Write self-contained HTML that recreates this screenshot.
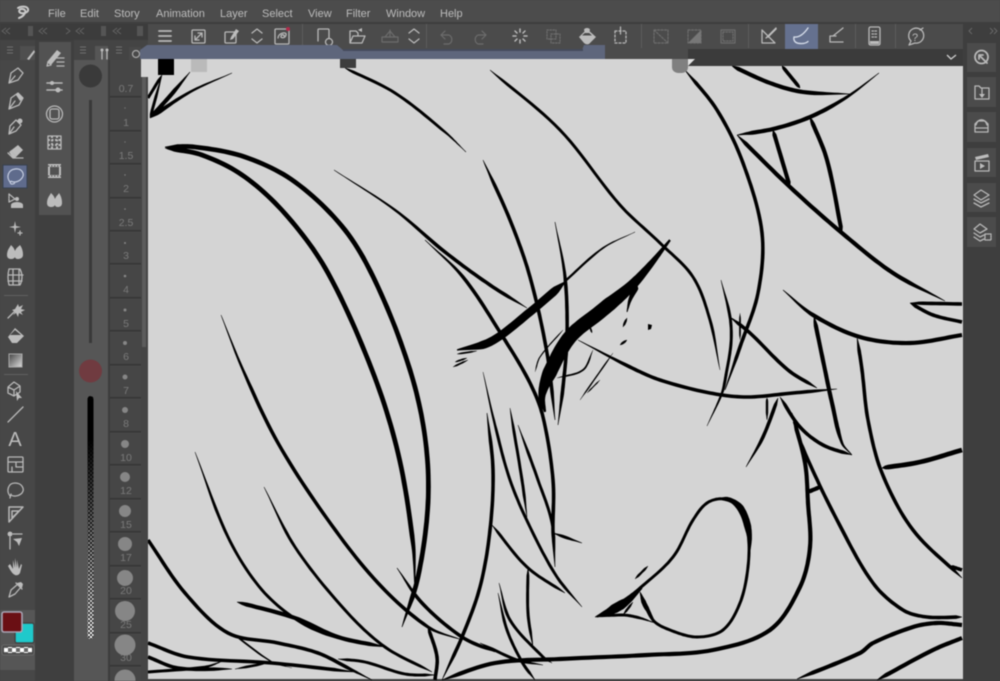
<!DOCTYPE html>
<html><head><meta charset="utf-8">
<style>
html,body{margin:0;padding:0;background:#444;width:1000px;height:681px;overflow:hidden}
svg{display:block;position:absolute;left:0;top:0;filter:blur(.45px)}
.m{font:11px "Liberation Sans",sans-serif;fill:#bcbcbc}
.n{font:10.5px "Liberation Sans",sans-serif;fill:#7a7a7a;text-anchor:middle}
.i{fill:none;stroke:#b8b8b8;stroke-width:1.3;stroke-linejoin:round;stroke-linecap:round}
.d{fill:none;stroke:#6c6c6c;stroke-width:1.2;stroke-linejoin:round;stroke-linecap:round}
.f{fill:#bcbcbc;stroke:none}
</style></head><body>
<svg width="1000" height="681" viewBox="0 0 1000 681" xmlns="http://www.w3.org/2000/svg">
<defs>
<pattern id="ck" width="4" height="4" patternUnits="userSpaceOnUse"><rect width="4" height="4" fill="#fff"/><rect width="2" height="2" fill="#333"/><rect x="2" y="2" width="2" height="2" fill="#333"/></pattern>
<pattern id="ck2" width="8" height="8" patternUnits="userSpaceOnUse"><rect width="8" height="8" fill="#fff"/><rect width="4" height="4" fill="#666"/><rect x="4" y="4" width="4" height="4" fill="#666"/></pattern>
<linearGradient id="fade" x1="0" y1="0" x2="0" y2="1"><stop offset="0" stop-color="#000"/><stop offset=".18" stop-color="#000"/><stop offset=".55" stop-color="#000" stop-opacity=".55"/><stop offset="1" stop-color="#000" stop-opacity="0"/></linearGradient>
<linearGradient id="gr" x1="0" y1="0" x2="1" y2="1"><stop offset="0" stop-color="#444"/><stop offset="1" stop-color="#ddd"/></linearGradient>
</defs>

<rect width="1000" height="681" fill="#444"/>
<rect width="1000" height="23" fill="#4c4c4c"/>
<rect y="22" width="1000" height="2" fill="#3e3e3e"/>
<path class="i" style="stroke-width:2;stroke:#c8c8c8" d="M18 8C21 6 27 6 28 9C29 12 24 14 21 13C18 12 19 9 22 9C25 9 26 11 25 13C24 15 22 17 19 18"/>
<text class="m" x="48" y="17">File</text>
<text class="m" x="80" y="17">Edit</text>
<text class="m" x="114" y="17">Story</text>
<text class="m" x="156" y="17">Animation</text>
<text class="m" x="220" y="17">Layer</text>
<text class="m" x="262" y="17">Select</text>
<text class="m" x="308" y="17">View</text>
<text class="m" x="346" y="17">Filter</text>
<text class="m" x="386" y="17">Window</text>
<text class="m" x="440" y="17">Help</text>

<rect x="148" y="24" width="815" height="25" fill="#4b4b4b"/>
<rect x="785" y="24" width="33" height="25" fill="#65718f"/>
<g fill="#5d5d5d"><rect x="302" y="24" width="1" height="24"/><rect x="426" y="24" width="1" height="24"/><rect x="641" y="24" width="1" height="24"/><rect x="748" y="24" width="1" height="24"/><rect x="855" y="24" width="1" height="24"/><rect x="895" y="24" width="1" height="24"/></g>
<path class="i" style="stroke-width:1.8" d="M159 31H171M159 36H171M159 41H171"/>
<rect class="i" x="192" y="30" width="13" height="13" rx="1"/><path class="i" d="M195 40L202 33M198 33H202V37M195 36V40H199"/>
<rect class="i" x="225" y="32" width="11" height="11" rx="1"/><path class="f" d="M231 37L236 29L239 31L233 39L230 40Z"/>
<path class="i" d="M252 33L257 29L262 33M252 39L257 43L262 39"/>
<rect class="i" x="275" y="29" width="14" height="15" rx="1"/><path class="i" d="M278 38C278 33 287 31 286 35C285 39 280 38 281 36C282 34 285 35 284 36"/><circle cx="288" cy="29" r="2" fill="#b02a4a"/>
<path class="i" d="M318 41V30Q318 29 319 29H328Q329 29 329 30V38"/><circle class="i" cx="329" cy="42" r="3.5"/>
<path class="i" d="M350 31H356L358 33V35M350 31V43H362L365 36H353L350 43"/><path class="f" d="M358 30l4-2v4z"/>
<path class="d" d="M382 42V37H398V42ZM385 37L390 31L395 37M390 30V36"/>
<path class="i" d="M409 33L414 29L419 33M409 39L414 43L419 39"/>
<path class="d" d="M441 35H449A5 5 0 0 1 449 44H444M441 35L445 31M441 35L445 39"/>
<path class="d" d="M486 35H478A5 5 0 0 0 478 44H483M486 35L482 31M486 35L482 39"/>
<path class="i" style="stroke-width:1.5" d="M520 29V32M520 40V43M513 36H516M524 36H527M515 31L517 33M523 39L525 41M525 31L523 33M517 39L515 41"/>
<path class="d" stroke-dasharray="1.5 1.5" d="M547 30H556V39H547ZM551 34H560V43H551Z"/>
<path class="f" d="M587 29L596 37L589 44Q586 45 584 43L579 37Z"/><path fill="#4b4b4b" d="M582 35.500H592L587 31Z"/><path class="f" d="M584 30a3 2 0 0 1 6 0l-1 3h-4z"/>
<path class="i" stroke-dasharray="2 2" d="M615 31H626V43H615Z"/><path class="i" d="M620.5 27V34"/>
<path class="d" stroke-dasharray="2 1.5" d="M654 30H668V43H654ZM654 30L668 43"/>
<rect class="d" x="688" y="30" width="13" height="13" stroke-dasharray="2 1.5"/><path fill="#777" d="M701 30V43H688Z"/>
<rect class="d" x="721" y="30" width="14" height="13"/><rect class="d" x="723" y="32" width="10" height="9" stroke-dasharray="1.5 1.5"/>
<path class="i" d="M762 30V43H775L762 30M766 38L776 28"/><path class="f" d="M767 37L776 28L777 29L768 38Z"/>
<path fill="none" stroke="#d4dbe8" stroke-width="1.4" stroke-linecap="round" d="M794 37Q793 43 800 43.5Q805 44 808 41.5M794 37Q801 38 808 28"/>
<path class="i" d="M830 42H843M830 42V36H836M833 36L843 28"/>
<rect class="i" x="869" y="27" width="11" height="18" rx="1.5"/><path class="i" stroke-dasharray="1.5 1.5" d="M872 31H877M872 34H877M872 37H877"/><rect class="f" x="870" y="41" width="9" height="3"/>
<path class="i" d="M909 45L911 41A7.5 7.5 0 1 1 915 43Z"/><text x="912" y="41" font-family="Liberation Sans" font-size="11" fill="#b8b8b8">?</text><path class="i" d="M920 30L923 28"/>

<rect x="141" y="59" width="822" height="620" fill="#d4d4d4"/>
<path id="art" fill="#000"/>

<rect x="141" y="77" width="7" height="604" fill="#454545"/>
<rect x="142" y="77" width="4" height="270" fill="#5c5c5c"/>
<rect x="0" y="24" width="148" height="16" fill="#3c3c3c"/>
<path fill="none" stroke="#626262" stroke-width="1" d="M6 28L2 31L6 34M10 28L6 31L10 34M43 28L39 31L43 34M47 28L43 31L47 34M66 28L70 31L66 34M80 28L76 31L80 34M84 28L80 31L84 34M117 28L113 31L117 34M121 28L117 31L121 34"/>
<rect x="28" y="26" width="5" height="10" fill="#555"/><rect x="101" y="26" width="5" height="10" fill="#555"/><rect x="137" y="26" width="6" height="10" fill="#555"/>

<rect x="0" y="40" width="35" height="641" fill="#444"/>
<rect x="20" y="46" width="16" height="14" fill="#4f4f4f"/>
<rect x="0" y="60" width="35" height="621" fill="#474747"/>
<path d="M7 47H13M7 50H13M7 53H13" stroke="#707070" fill="none"/>
<path class="f" d="M27 59L34 50L35 52L29 60Z"/>
<rect x="35" y="40" width="39" height="641" fill="#3f3f3f"/>
<rect x="39" y="42" width="32" height="173" fill="#525252"/>
<rect x="74" y="60" width="34" height="621" fill="#565656"/>
<rect x="95" y="46" width="13" height="14" fill="#565656"/>
<path d="M80 47H86M80 50H86M80 53H86M116 47H122M116 50H122M116 53H122" stroke="#707070" fill="none"/>
<path class="i" d="M102 50V59M107 50V59"/><circle class="f" cx="102" cy="50" r="1.5"/><circle class="f" cx="107" cy="50" r="1.5"/>
<rect x="129" y="47" width="12" height="13" fill="#4e4e4e" opacity=".5"/>
<circle cx="136" cy="54" r="3.5" fill="none" stroke="#aaa" stroke-width="1.2"/>
<circle cx="90.5" cy="76" r="11.5" fill="#3a3a3a"/>
<rect x="89" y="100" width="3" height="243" fill="#393939"/>
<circle cx="90.5" cy="371" r="11.5" fill="#703b40"/>
<rect x="87.5" y="396" width="6" height="243" rx="3" fill="url(#ck)"/>
<rect x="87.5" y="396" width="6" height="243" rx="3" fill="url(#fade)"/>
<rect x="108" y="60" width="33" height="621" fill="#3c3c3c"/>
<rect x="110" y="60" width="31" height="621" fill="#464646"/>
<g fill="#353535">
<rect x="110" y="96" width="31" height="1.5"/><rect x="110" y="130" width="31" height="1.5"/><rect x="110" y="163" width="31" height="1.5"/><rect x="110" y="197" width="31" height="1.5"/><rect x="110" y="230" width="31" height="1.5"/><rect x="110" y="263" width="31" height="1.5"/><rect x="110" y="297" width="31" height="1.5"/><rect x="110" y="330" width="31" height="1.5"/><rect x="110" y="364" width="31" height="1.5"/><rect x="110" y="397" width="31" height="1.5"/><rect x="110" y="431" width="31" height="1.5"/><rect x="110" y="464" width="31" height="1.5"/><rect x="110" y="498" width="31" height="1.5"/><rect x="110" y="531" width="31" height="1.5"/><rect x="110" y="565" width="31" height="1.5"/><rect x="110" y="598" width="31" height="1.5"/><rect x="110" y="632" width="31" height="1.5"/><rect x="110" y="665" width="31" height="1.5"/>
</g>
<text class="n" x="126" y="92">0.7</text>
<text class="n" x="126" y="126">1</text>
<text class="n" x="126" y="159">1.5</text>
<text class="n" x="126" y="192">2</text>
<text class="n" x="126" y="226">2.5</text>
<text class="n" x="126" y="259">3</text>
<text class="n" x="126" y="293">4</text>
<text class="n" x="126" y="327">5</text>
<text class="n" x="126" y="360">6</text>
<text class="n" x="126" y="394">7</text>
<text class="n" x="126" y="427">8</text>
<text class="n" x="126" y="461">10</text>
<text class="n" x="126" y="494">12</text>
<text class="n" x="126" y="528">15</text>
<text class="n" x="126" y="561">17</text>
<text class="n" x="126" y="594">20</text>
<text class="n" x="126" y="628">25</text>
<text class="n" x="126" y="661">30</text>
<g fill="#868686">
<circle cx="125" cy="108" r=".6"/><circle cx="125" cy="142" r=".6"/><circle cx="125" cy="175" r=".7"/><circle cx="125" cy="209" r=".8"/><circle cx="125" cy="243" r="1"/>
<circle cx="125" cy="276" r="1.3"/><circle cx="125" cy="310" r="1.5"/><circle cx="125" cy="343" r="2"/><circle cx="125" cy="377" r="2.5"/><circle cx="125" cy="410" r="3"/><circle cx="125" cy="444" r="4"/><circle cx="125" cy="477" r="5"/><circle cx="125" cy="511" r="6"/><circle cx="125" cy="544" r="7"/><circle cx="125" cy="578" r="8"/><circle cx="125" cy="611" r="10"/><circle cx="125" cy="645" r="10.5"/><circle cx="125" cy="680" r="10.5"/>
</g>

<g>
<path class="i" d="M9 83L11 73L18 68L23 73L18 80ZM9 83L15 76"/>
<path class="i" d="M9 109L11 98L18 93L23 98L19 105ZM9 109L15 101"/><path class="f" d="M16 95L18 93L23 98L20 101Z"/>
<path class="i" d="M9 134L10 126L16 120L21 125L16 131ZM9 134L14 127"/><circle class="f" cx="20" cy="121" r="2.5"/>
<path class="f" d="M9 152L18 145L23 150L15 158H13Z"/><path class="i" d="M8 153L13 158H23M11 151L16 156"/>
<rect x="3" y="165" width="24" height="23" fill="#5f6b8c" stroke="#37404f"/>
<path fill="none" stroke="#c5cde0" stroke-width="1.2" d="M10 182C6 177 8 170 15 169C22 168 25 174 22 178C19 182 14 183 11 181M11 181C9 184 12 185 15 183"/>
<path class="i" stroke-dasharray="1.5 1" d="M9 194V202M9 194L15 199L9 202"/><path class="f" d="M11 205a6 3 0 0 1 12 0v3H11z"/><circle class="f" cx="17" cy="199" r="2"/>
<path class="f" d="M15 221L16 226L21 227L16 228L15 233L14 228L9 227L14 226Z"/><path class="i" d="M20 231V235M18 233H22"/>
<path class="f" d="M7 255C7 250 10 247 11 245C13 247 14 248 15 251C16 248 18 247 20 245C22 248 23 251 23 255C23 258 20 259 18 259C16 259 15 258 15 257C14 259 12 259 11 259C9 259 7 258 7 255Z"/>
<path class="i" d="M9 269H20Q24 277 20 285H9Q7 277 9 269ZM8 275H23M8 281H22M13 269V285M19 269V285"/>
<rect x="4" y="295" width="24" height="1" fill="#606060"/>
<path class="i" d="M8 318L16 310"/><path class="f" d="M18 304L19 307L23 305L21 309L25 310L21 312L23 315L19 313L18 317L16 313L13 315L15 312L12 310L15 309Z"/>
<path class="f" d="M15 328L24 336L17 343H12L8 337Z"/><path fill="#474747" d="M10 335H21L15 330Z"/>
<rect x="9" y="354" width="13" height="13" fill="url(#gr)" stroke="#aaa"/>
<rect x="4" y="374" width="24" height="1" fill="#606060"/>
<path class="i" d="M8 387L14 382L20 386V392L14 396L8 393ZM8 387L14 390L20 386M14 390V396"/><path class="f" d="M16 391L17 401L19 398L22 398Z"/>
<path class="i" d="M8 422L23 407"/>
<text x="15" y="446" font-family="Liberation Sans" font-size="20" fill="#bcbcbc" text-anchor="middle">A</text>
<rect class="i" x="8" y="457" width="15" height="15" rx="1"/><path class="i" d="M8 462H23M16 462V467M16 467H23M12 467V472"/>
<path class="i" d="M10 496C6 491 8 483 15 483C22 483 25 489 22 493C19 496 14 497 11 495Z"/><path class="i" d="M11 494L10 498"/>
<path class="i" style="stroke-width:1.5" d="M9 522V507L23 507ZM12 518V511L19 511Z"/>
<path class="i" d="M10 532V549M8 534H22"/><rect class="f" x="8" y="532" width="4" height="4"/><path class="f" d="M13 539L22 538L19 546L17 542Z"/>
<path class="f" d="M10 564L13 569V560L15 568V558L17 568V560L19 569L21 564L22 565L20 573Q18 576 15 575Q12 574 8 566Z"/>
<path class="i" d="M9 597L11 590L18 584L21 587L15 594ZM16 583L22 589"/>
<path class="f" d="M17 583L21 582L23 584L22 588Z"/>
</g>
<rect x="0" y="610" width="35" height="60" fill="#565656"/>
<rect x="15" y="623" width="19" height="20" rx="2" fill="#1fc9cb" stroke="#444" stroke-width="1.5"/>
<rect x="2" y="612" width="20" height="20" rx="2" fill="#6a0f14" stroke="#a8a4b4" stroke-width="1.6"/>
<rect x="2" y="645" width="32" height="10" rx="2" fill="#4a4a4a" stroke="#707070" stroke-width=".8"/>
<rect x="4" y="647" width="28" height="6" fill="url(#ck2)"/>

<g>
<path class="f" d="M47 62L57 50L61 53L51 65Z"/><path class="i" d="M47 66L48 62L51 65ZM57 58H64M57 62H64M57 66H64"/>
<path class="i" style="stroke-width:1.6" d="M47 83H62M47 90H62"/><circle class="f" cx="52" cy="83" r="2"/><circle class="f" cx="58" cy="90" r="2.5"/>
<circle class="i" cx="54.5" cy="114" r="8"/><rect class="i" x="50" y="109" width="9" height="10" rx="2"/>
<rect class="i" x="48" y="136" width="13" height="13"/><path d="M48 140H61M48 145H61M52 136V149M57 136V149" stroke="#b8b8b8" stroke-width="2" stroke-dasharray="2 1.5" fill="none"/>
<rect class="f" x="48" y="164" width="13" height="14"/><rect x="50" y="167" width="9" height="8" fill="#525252"/><path d="M48 166H61M48 176H61" stroke="#525252" stroke-dasharray="1.5 1.5" fill="none"/>
<path class="f" d="M47 203C47 198 50 195 51 193C53 195 54 196 55 199C56 196 58 195 59 193C61 196 62 199 62 203C62 206 60 207 58 207C56 207 55 206 55 205C54 207 52 207 51 207C49 207 47 206 47 203Z"/>
</g>

<path fill="#5e667c" d="M140 50L147 45H337L343 50H582L584 45H605V59H140Z"/>
<rect x="343" y="49" width="240" height="2" fill="#454b5c"/>
<rect x="605" y="48" width="84" height="11" fill="#4b4b4b"/>
<rect x="688" y="49" width="275" height="17" fill="#3b3b3b"/>
<path d="M947 55L951 59L956 55" fill="none" stroke="#cfcfcf" stroke-width="1.3"/>
<rect x="158" y="59" width="16" height="16" fill="#000"/>
<rect x="191" y="59" width="16" height="13" fill="#bababa"/>
<rect x="340" y="59" width="16" height="9" fill="#3d3d3d"/>
<path d="M672 59H688V67Q688 72 682 73H678Q672 72 672 67Z" fill="#808080"/>
<path d="M688 59H695L688 66Z" fill="#e2e2e2"/>

<rect x="963" y="24" width="37" height="657" fill="#3e3e3e"/>
<path d="M972 28L969 31L972 34M990 28L993 31L990 34M994 28L997 31L994 34" fill="none" stroke="#666"/>
<g fill="#4b4b4b"><rect x="967" y="43" width="29" height="29"/><rect x="967" y="77" width="29" height="30"/><rect x="967" y="112" width="29" height="30"/><rect x="967" y="148" width="29" height="29"/><rect x="967" y="183" width="29" height="29"/><rect x="967" y="217" width="29" height="30"/></g>
<circle class="i" style="stroke-width:1.8" cx="981.5" cy="57" r="6.5"/><path class="i" style="stroke-width:1.8" d="M979 55L987 63M979 55H983M979 55V59"/>
<path class="i" d="M975 86H979L981 88H989V99H975ZM982 89V95"/><path class="f" d="M979 94H985L982 98Z"/>
<path class="i" d="M975 124L978 121H985L988 124V132H975ZM975 128H988"/><path class="i" d="M976 125C978 118 985 118 987 125"/>
<path class="i" d="M975 161H989V171H975Z"/><path class="f" d="M975 157L988 154L989 157L976 160Z"/><path class="f" d="M980 163L985 166L980 169Z"/>
<path class="i" d="M981 190L989 195L981 200L974 195ZM974 199L981 203L989 199M974 203L981 207L989 203"/>
<path class="i" d="M980 224L987 229L980 233L974 229ZM974 233L980 237L984 235M974 237L980 241L984 239"/><rect class="i" x="985" y="234" width="6" height="6" stroke-dasharray="1.5 1"/>
</svg>
<script>
(function(){
var S=[
[2.5,.1,.5,150,118,162,75],[3.5,.1,.4,150,118,170,96,190,72],[3.6,.1,.9,150,118,190,92,232,73],[2.5,0,.2,148,98,162,75],
[4,.02,.05,165,147,195,147,245,157,295,182,345,230,378,287,410,370,425,437,428,503,418,577,402,627],
[4,.02,.1,165,148,202,155,245,177,288,217,328,273,372,370,398,453,413,543,415,590],
[3,.5,.1,334,170,395,210,445,252,490,285,527,308],
[3,.15,.1,425,240,463,277,503,337,530,383,543,417,553,480,553,533,555,567],
[2.5,.05,.25,345,68,395,93,445,132,466,152],
[3,.2,.1,221,315,243,370,278,443,328,520,378,583,428,627,462,640],
[3,.25,.1,397,568,422,603,462,637,495,652],
[3,.1,.1,487,413,493,470,490,530,480,587,462,637,442,680],
[2.5,.2,.2,195,452,228,537,262,590,302,623,345,640,385,647],
[2.5,.2,.05,264,487,295,547,345,610,385,647,432,672],
[3.5,.05,.1,237,602,295,618,338,637,385,647],
[3,0,.1,148,540,185,593,228,633,278,643,318,653,352,670,372,680],
[1.5,.1,.5,232,633,272,662,292,668],
[3,0,.1,148,643,188,657,272,663,355,672],
[3,0,.2,148,657,178,668,232,669],
[2.5,0,.3,148,672,205,667,225,660],
[2,.3,.3,235,669,268,663],
[2.5,.1,.1,338,659,365,662,405,674,435,675],
[3,.1,0,428,627,437,657,435,680],
[3.5,.03,.03,442,680,495,663,560,659,647,655,713,650,770,630,800,587,810,547,808,503,805,463,792,413],
[2.5,.03,.02,595,617,620,603,640,588,673,557,693,520,707,503,723,499,740,508,748,533,748,567,740,603,723,630,697,637,670,630,653,620,640,592],
[6,.35,.4,715,500,728,499,741,509,749,533,749,558],
[2.5,.3,.3,595,617,623,615,640,618,655,623],
[8,.35,.5,597,617,612,610,627,601,642,588],
[4,.3,.5,640,592,645,605,655,622],
[2,.3,.3,623,615,633,602],
[2,.2,.2,648,566,635,579],
[2.5,.25,.1,483,372,495,425,510,480,530,527,557,577,582,607],
[2.5,.2,.2,510,408,522,480,527,517],
[2.5,.2,.2,518,425,538,480,552,523,555,567],
[2.5,.3,.5,553,533,582,543],
[2.5,.1,.1,492,525,527,567,565,593],
[2.5,.1,.2,528,568,528,613,533,647],
[2.5,.3,.1,499,583,510,620,543,657,552,663],
[2.5,.3,.1,498,593,507,630,522,662,535,680],
[2.5,.2,.3,480,643,517,660,543,665],
[7,.2,.1,457,350,490,342,530,312,565,282],
[2,.05,.6,563,283,603,248,635,232],
[1.5,.2,.3,457,354,477,351],[1.5,.2,.3,453,367,468,360],[1.5,.2,.3,455,362,467,358],
[12,.18,.4,545,412,542,395,550,372,570,337,600,312,630,287,650,265,670,240],
[5,.1,.85,637,285,630,300,627,312],
[3,.3,.15,555,222,565,277,567,337,563,387,558,425],
[3,.1,.1,483,160,510,220,530,277,547,353,555,420],
[2.5,.05,.1,490,70,560,130,620,205,660,243,693,277,710,320,720,370],
[1.5,.5,.5,670,240,660,252],
[3,.2,.1,578,340,630,367,660,380,710,393,747,397,793,393,837,389],
[1.5,.2,.2,593,350,583,370,557,378],
[1,.1,.1,563,330,540,357,535,372],
[1.2,.2,.2,613,353,580,400],[1,.2,.2,600,380,587,393],[2,.3,.3,627,318,623,327],[2,.3,.3,627,340,620,345],[1.5,.3,.3,590,327,592,333],
[3,.05,.1,685,70,717,110,743,163,762,233,758,293,740,347,725,390],
[2.5,.2,.3,721,280,730,317,731,343,726,375,722,393,707,426],
[1.5,.2,.2,740,313,740,340],
[3,.1,.1,730,317,750,333,788,370,817,388],
[3.5,.05,.3,732,66,770,83,803,92,850,94],
[3,.1,.1,782,66,800,88],
[3.5,.1,.4,737,135,773,129,810,117,847,97,879,73],
[3.5,.05,.05,773,130,790,187],
[3.5,.05,.05,810,117,827,160,842,233],
[3.5,.05,.15,737,135,790,187,842,233,893,273,945,301],
[3,.2,0,910,303,962,304],[3,.1,0,910,303,933,315,962,322],
[3.5,.2,0,783,290,813,315,860,337,910,343,962,335],
[3.5,.05,.2,814,317,825,370,832,403,842,443,852,455],
[3,.05,.05,857,337,862,370,868,420,882,473,913,530,962,578],
[4,.05,0,882,468,920,462,962,450],
[3,.2,0,950,566,962,570],
[3,.1,.02,793,422,808,460,837,520,873,583,903,610,927,617,962,617],
[3.5,.1,.1,808,492,820,487],
[3,.1,.1,780,397,800,427,823,445,852,455],
[2,.1,.3,767,398,767,420],
[3,.1,.4,778,398,763,437,746,467],
[3.5,.1,0,797,679,860,653,873,643,913,627,937,623,962,625],
[3.5,.1,0,877,680,933,650,962,638]
];
function dist(a,b){return Math.hypot(a[0]-b[0],a[1]-b[1])||1;}
function cr(p){var o=[],n=p.length,i,j;for(i=0;i<n-1;i++){var a=p[Math.max(i-1,0)],b=p[i],c=p[i+1],d=p[Math.min(i+2,n-1)];
var L=dist(b,c),la=i>0?dist(a,b):0,ld=i<n-2?dist(c,d):0;
var m1=[(c[0]-a[0])/(L+la)*L,(c[1]-a[1])/(L+la)*L],m2=[(d[0]-b[0])/(L+ld)*L,(d[1]-b[1])/(L+ld)*L];
for(j=0;j<12;j++){var t=j/12,t2=t*t,t3=t2*t,h1=2*t3-3*t2+1,h2=t3-2*t2+t,h3=-2*t3+3*t2,h4=t3-t2;
o.push([h1*b[0]+h2*m1[0]+h3*c[0]+h4*m2[0],h1*b[1]+h2*m1[1]+h3*c[1]+h4*m2[1]]);}}
o.push(p[n-1]);return o;}
var out='';
S.forEach(function(s){var w=s[0]*1.18,ts=s[1],te=s[2],p=[],i;for(i=3;i<s.length;i+=2)p.push([s[i],s[i+1]]);
var c=cr(p),n=c.length,len=[0];for(i=1;i<n;i++)len[i]=len[i-1]+Math.hypot(c[i][0]-c[i-1][0],c[i][1]-c[i-1][1]);
var L=len[n-1]||1,l=[],r=[];
for(i=0;i<n;i++){var a=c[Math.max(i-1,0)],b=c[Math.min(i+1,n-1)],dx=b[0]-a[0],dy=b[1]-a[1],h=Math.hypot(dx,dy)||1,u=len[i]/L;
var f=1;if(ts>0&&u<ts)f=Math.min(f,.15+.85*u/ts);if(te>0&&(1-u)<te)f=Math.min(f,.15+.85*(1-u)/te);
var q=w*f/2,nx=-dy/h*q,ny=dx/h*q;l.push((c[i][0]+nx).toFixed(1)+' '+(c[i][1]+ny).toFixed(1));r.unshift((c[i][0]-nx).toFixed(1)+' '+(c[i][1]-ny).toFixed(1));}
out+='M'+l.join('L')+'L'+r.join('L')+'Z';});
out+='M648 324l4 1l-1 4l-3 1z';
document.getElementById('art').setAttribute('d',out);
})();
</script>
</body></html>
